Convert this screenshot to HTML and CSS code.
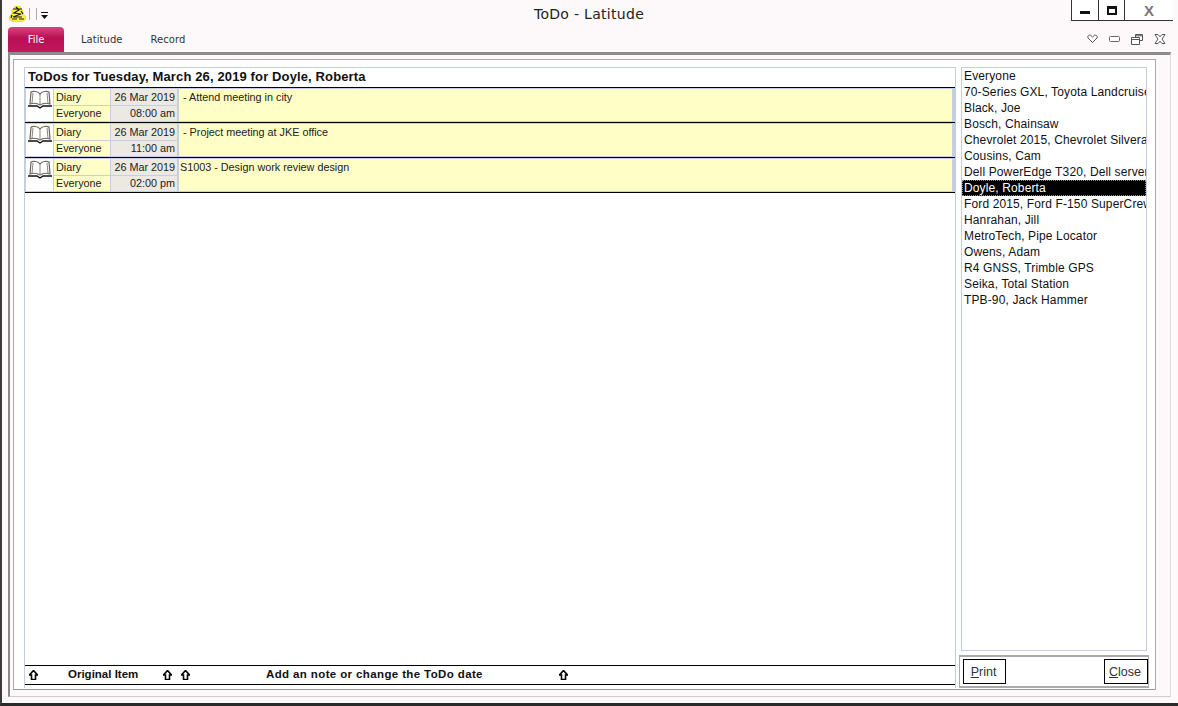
FILE: index.html
```html
<!DOCTYPE html>
<html lang="en">
<head>
  <meta charset="UTF-8" />
  <title>ToDo - Latitude</title>
  <link rel="stylesheet" href="styles.css">
</head>
<body>
  <svg class="sprites" width="0" height="0">
    <symbol id="book" viewBox="0 0 24 19">
      <path d="M12 4C10 1 5 1 3 2L2 14C5 13 9 13 12 15C15 13 19 13 22 14L21 2C19 1 14 1 12 4Z" fill="#fff" stroke="#6e6660" stroke-width="1.2"/>
      <path d="M12 4V15M5 3 4 13M19 3 20 13" fill="none" stroke="#8d8780" stroke-width="1"/>
      <path d="M0 16H9L12 18 15 16H24" fill="none" stroke="#111" stroke-width="1.4"/>
    </symbol>
    <symbol id="up" viewBox="0 0 9 10">
      <path d="M4.500 .5 8.500 5H6.500V9.500H2.500V5H.5Z" fill="#fff" stroke="#000" stroke-width="1.600"/>
    </symbol>
  </svg>

  <div class="window">
    <div class="titlebar">
      <div class="quick">
        <svg class="logo" width="18" height="16" viewBox="0 0 18 16">
          <path d="M6 0H11L12 3 14 5 14 8 17 11 16 14 12 16H4L1 14 0 11 3 8 3 4 5 3Z" fill="#ffee44" stroke="#c9b800" stroke-width=".5"/>
          <path d="M4 3H13M7 1 10 4 5 7 12 8 4 11H13M3 13H8M10 13H15M12 5 14 8M3 9 2 12" fill="none" stroke="#1a1a1a" stroke-width="1.200"/>
        </svg>
        <span class="quick-sep"></span>
        <span class="quick-sep"></span>
        <svg class="quick-drop" width="7" height="7" viewBox="0 0 7 7">
          <path d="M0 0H7V1H0ZM0 3H7L3.500 7Z" fill="#111"/>
        </svg>
      </div>
      <div class="title">ToDo - Latitude</div>
      <div class="win-buttons">
        <span class="win-btn win-min"><i class="ico-min"></i></span>
        <span class="win-btn win-max"><i class="ico-max"></i></span>
        <span class="win-btn win-close">X</span>
      </div>
    </div>

    <div class="menubar">
      <div class="tab-file">File</div>
      <div class="tab tab-latitude">Latitude</div>
      <div class="tab tab-record">Record</div>
      <div class="ribbon-icons">
        <svg width="11" height="10" viewBox="0 0 11 10"><path d="M5.500 8.500 1 4C0 2 2 .8 3.500 1.200L5.500 3 7.500 1.200C9 .8 11 2 10 4Z" fill="#fff" stroke="#555"/></svg>
        <svg width="11" height="6" viewBox="0 0 11 6"><rect x=".5" y=".5" width="10" height="5" rx="1" fill="#fff" stroke="#666"/></svg>
        <svg width="12" height="11" viewBox="0 0 12 11"><path d="M4.500 3V.5H11.500V6.500H8.500M.5 3.500H8.500V10.500H.5ZM.5 5.500H8.500M4.500 1.800H11.500" fill="#fff" stroke="#555"/></svg>
        <svg width="12" height="10" viewBox="0 0 12 10"><path d="M1 .5H4L6 2.800 8 .5H11L8 5 11 9.500H8L6 7.200 4 9.500H1L4 5Z" fill="#fff" stroke="#555"/></svg>
      </div>
    </div>

    <div class="frame">
      <div class="frame-inner">
        <div class="todo-panel">
          <div class="todo-heading">ToDos for Tuesday, March 26, 2019 for Doyle, Roberta</div>

          <div class="todo-row">
            <div class="cell-icon"><svg width="24" height="19"><use href="#book"/></svg></div>
            <div class="cell-kind">Diary</div>
            <div class="cell-date">26 Mar 2019</div>
            <div class="cell-note"> - Attend meeting in city</div>
            <div class="cell-kind">Everyone</div>
            <div class="cell-date">08:00 am</div>
          </div>
          <div class="todo-row">
            <div class="cell-icon"><svg width="24" height="19"><use href="#book"/></svg></div>
            <div class="cell-kind">Diary</div>
            <div class="cell-date">26 Mar 2019</div>
            <div class="cell-note"> - Project meeting at JKE office</div>
            <div class="cell-kind">Everyone</div>
            <div class="cell-date">11:00 am</div>
          </div>
          <div class="todo-row">
            <div class="cell-icon"><svg width="24" height="19"><use href="#book"/></svg></div>
            <div class="cell-kind">Diary</div>
            <div class="cell-date">26 Mar 2019</div>
            <div class="cell-note">S1003 - Design work review design</div>
            <div class="cell-kind">Everyone</div>
            <div class="cell-date">02:00 pm</div>
          </div>

          <div class="todo-footer">
            <svg class="arrow" width="9" height="10"><use href="#up"/></svg>
            <span class="foot-original">Original Item</span>
            <svg class="arrow arrow-b" width="9" height="10"><use href="#up"/></svg>
            <svg class="arrow arrow-c" width="9" height="10"><use href="#up"/></svg>
            <span class="foot-note">Add an note or change the ToDo date</span>
            <svg class="arrow arrow-d" width="9" height="10"><use href="#up"/></svg>
          </div>
        </div>

        <div class="side">
          <ul class="people">
            <li>Everyone</li>
            <li>70-Series GXL, Toyota Landcruiser</li>
            <li>Black, Joe</li>
            <li>Bosch, Chainsaw</li>
            <li>Chevrolet 2015, Chevrolet Silverado</li>
            <li>Cousins, Cam</li>
            <li>Dell PowerEdge T320, Dell server</li>
            <li class="selected">Doyle, Roberta</li>
            <li>Ford 2015, Ford F-150 SuperCrew</li>
            <li>Hanrahan, Jill</li>
            <li>MetroTech, Pipe Locator</li>
            <li>Owens, Adam</li>
            <li>R4 GNSS, Trimble GPS</li>
            <li>Seika, Total Station</li>
            <li>TPB-90, Jack Hammer</li>
          </ul>
          <div class="side-buttons">
            <button class="btn btn-print"><u>P</u>rint</button>
            <button class="btn btn-close"><u>C</u>lose</button>
          </div>
        </div>
      </div>
    </div>
  </div>
</body>
</html>
```

FILE: styles.css
```css
* {
  margin: 0;
  padding: 0;
  box-sizing: border-box;
}
body {
  width: 1178px;
  height: 706px;
  overflow: hidden;
  background: #fdf9fb;
  font-family: "Liberation Sans", Arial, sans-serif;
  color: #111;
}
.sprites {
  display: block;
  height: 0;
}
.window {
  height: 706px;
  display: flex;
  flex-direction: column;
  border-left: 2px solid #3a3a3a;
  border-bottom: 3px solid #2a2a2a;
}

/* title bar */
.titlebar {
  height: 26px;
  flex: none;
  display: flex;
  align-items: flex-start;
  position: relative;
}
.quick {
  display: flex;
  align-items: center;
  padding: 6px 0 0 7px;
}
.logo {
  margin-right: 2px;
}
.quick-sep {
  width: 1px;
  height: 12px;
  background: #aaa;
  margin-right: 6px;
}
.quick-drop {
  margin: 3px 0 0 -2px;
}
.title {
  position: absolute;
  left: 0;
  right: 2px;
  top: 6px;
  text-align: center;
  font-family: "DejaVu Sans", sans-serif;
  font-size: 14px;
  letter-spacing: 0.3px;
  color: #222;
}
.win-buttons {
  margin-left: auto;
  margin-right: 5px;
  display: flex;
  height: 21px;
  border-left: 1px solid #333;
  border-bottom: 1px solid #333;
  background: #fff;
}
.win-btn {
  display: flex;
  align-items: center;
  justify-content: center;
  border-right: 1px solid #333;
}
.win-min {
  width: 27px;
}
.win-max {
  width: 26px;
}
.win-close {
  width: 48px;
  border-right: none;
  font-size: 15px;
  font-weight: bold;
  color: #777;
}
.ico-min {
  display: block;
  width: 10px;
  height: 3px;
  margin-top: 5px;
  background: #111;
}
.ico-max {
  display: block;
  width: 10px;
  height: 9px;
  border: 2px solid #111;
  border-top-width: 3px;
}

/* tabs */
.menubar {
  height: 26px;
  flex: none;
  display: flex;
  position: relative;
  padding-left: 6px;
}
.tab-file {
  width: 56px;
  height: 25px;
  margin-top: 1px;
  border-radius: 4px 4px 0 0;
  background: linear-gradient(#d9457f, #b80f52 45%, #c2185f);
  color: #fff;
  font-family: "DejaVu Sans", sans-serif;
  font-size: 10px;
  text-align: center;
  line-height: 26px;
}
.tab {
  font-family: "DejaVu Sans", sans-serif;
  font-size: 10px;
  letter-spacing: 0.05px;
  color: #333;
  line-height: 28px;
}
.tab-latitude {
  margin-left: 17px;
}
.tab-record {
  margin-left: 28px;
}
.ribbon-icons {
  margin-left: auto;
  margin-right: 12px;
  display: flex;
  align-items: center;
  gap: 11px;
}

/* frames */
.frame {
  flex: 1;
  margin: 0 7px 6px 6px;
  padding: 4px 14px 6px 3px;
  border-top: 3px solid #8c8c8c;
  border-left: 2px solid #8a8a8a;
  border-right: 1px solid #ddd;
  border-bottom: 1px solid #ccc;
  display: flex;
}
.frame-inner {
  flex: 1;
  display: flex;
  padding: 7px 5px 1px 10px;
  border: 1px solid #aaa;
  border-bottom-color: #999;
  background: #fff;
}
.todo-panel {
  width: 932px;
  flex: none;
  display: flex;
  flex-direction: column;
  background: #fff;
  border-left: 1px solid #c5cce0;
  border-right: 1px solid #c5cce0;
  border-top: 1px solid #c5cce0;
}
.todo-heading {
  height: 20px;
  flex: none;
  padding-left: 3px;
  font-size: 13px;
  font-weight: bold;
  line-height: 18px;
  letter-spacing: 0.13px;
  border-bottom: 1px solid #000;
}

/* rows */
.todo-row {
  flex: none;
  height: 35px;
  display: grid;
  grid-template-columns: 27px 56px 66px 1fr;
  grid-template-rows: 16px 15px;
  gap: 1px;
  padding: 1px;
  background: #c6cee2;
  border-bottom: 1px solid #000;
}
.cell-icon {
  grid-row: span 2;
  background: #fff;
  display: flex;
  justify-content: center;
  padding-top: 1px;
}
.cell-kind,
.cell-date,
.cell-note {
  font-size: 10.8px;
  line-height: 15px;
  color: #222;
  white-space: pre;
}
.cell-kind {
  background: #fefec6;
  padding-left: 2px;
}
.cell-date {
  background: #ebe9e1;
  text-align: right;
  padding-right: 2px;
}
.cell-kind:nth-child(2),
.cell-date:nth-child(3),
.cell-note {
  padding-top: 1px;
}
.cell-note {
  grid-column: 4;
  grid-row: 1 / span 2;
  background: #fefec6;
  margin-left: 1px;
  margin-right: 2px;
  padding-left: 1px;
}

/* footer of the list */
.todo-footer {
  margin-top: auto;
  height: 20px;
  flex: none;
  display: flex;
  align-items: center;
  padding-left: 4px;
  margin-bottom: 3px;
  border-top: 1px solid #000;
  border-bottom: 1px solid #000;
  font-size: 11.5px;
  font-weight: bold;
  line-height: 15px;
}
.arrow {
  flex: none;
}
.foot-original {
  margin-left: 30px;
  width: 95px;
  padding-bottom: 2px;
}
.arrow-c {
  margin-left: 9px;
}
.foot-note {
  margin-left: 76px;
  width: 293px;
  padding-bottom: 2px;
  letter-spacing: 0.38px;
}

/* right side */
.side {
  width: 190px;
  flex: none;
  margin-left: 3px;
  display: flex;
  flex-direction: column;
  gap: 4px;
}
.people {
  flex: 1;
  list-style: none;
  margin: 0 2px;
  border: 1px solid #c5cce0;
  overflow: hidden;
  font-size: 12px;
  letter-spacing: 0.13px;
  min-height: 0;
}
.people li {
  height: 16px;
  line-height: 16px;
  padding-left: 2px;
  white-space: nowrap;
  overflow: hidden;
}
.people .selected {
  background: #000;
  color: #fff;
  outline: 1px dotted #888;
  outline-offset: -1px;
}
.side-buttons {
  height: 33px;
  flex: none;
  display: flex;
  justify-content: space-between;
  align-items: flex-start;
  padding: 2px 0 0 3px;
  border: 1px solid #aaa;
  border-width: 2px 1px 2px 1px;
}
.btn {
  height: 25px;
  background: #fff;
  border: 1px solid #000;
  padding-right: 2px;
  font-family: "Liberation Sans", Arial, sans-serif;
  font-size: 12.5px;
  color: #333;
}
.btn-print {
  width: 43px;
}
.btn-close {
  width: 44px;
}
```
